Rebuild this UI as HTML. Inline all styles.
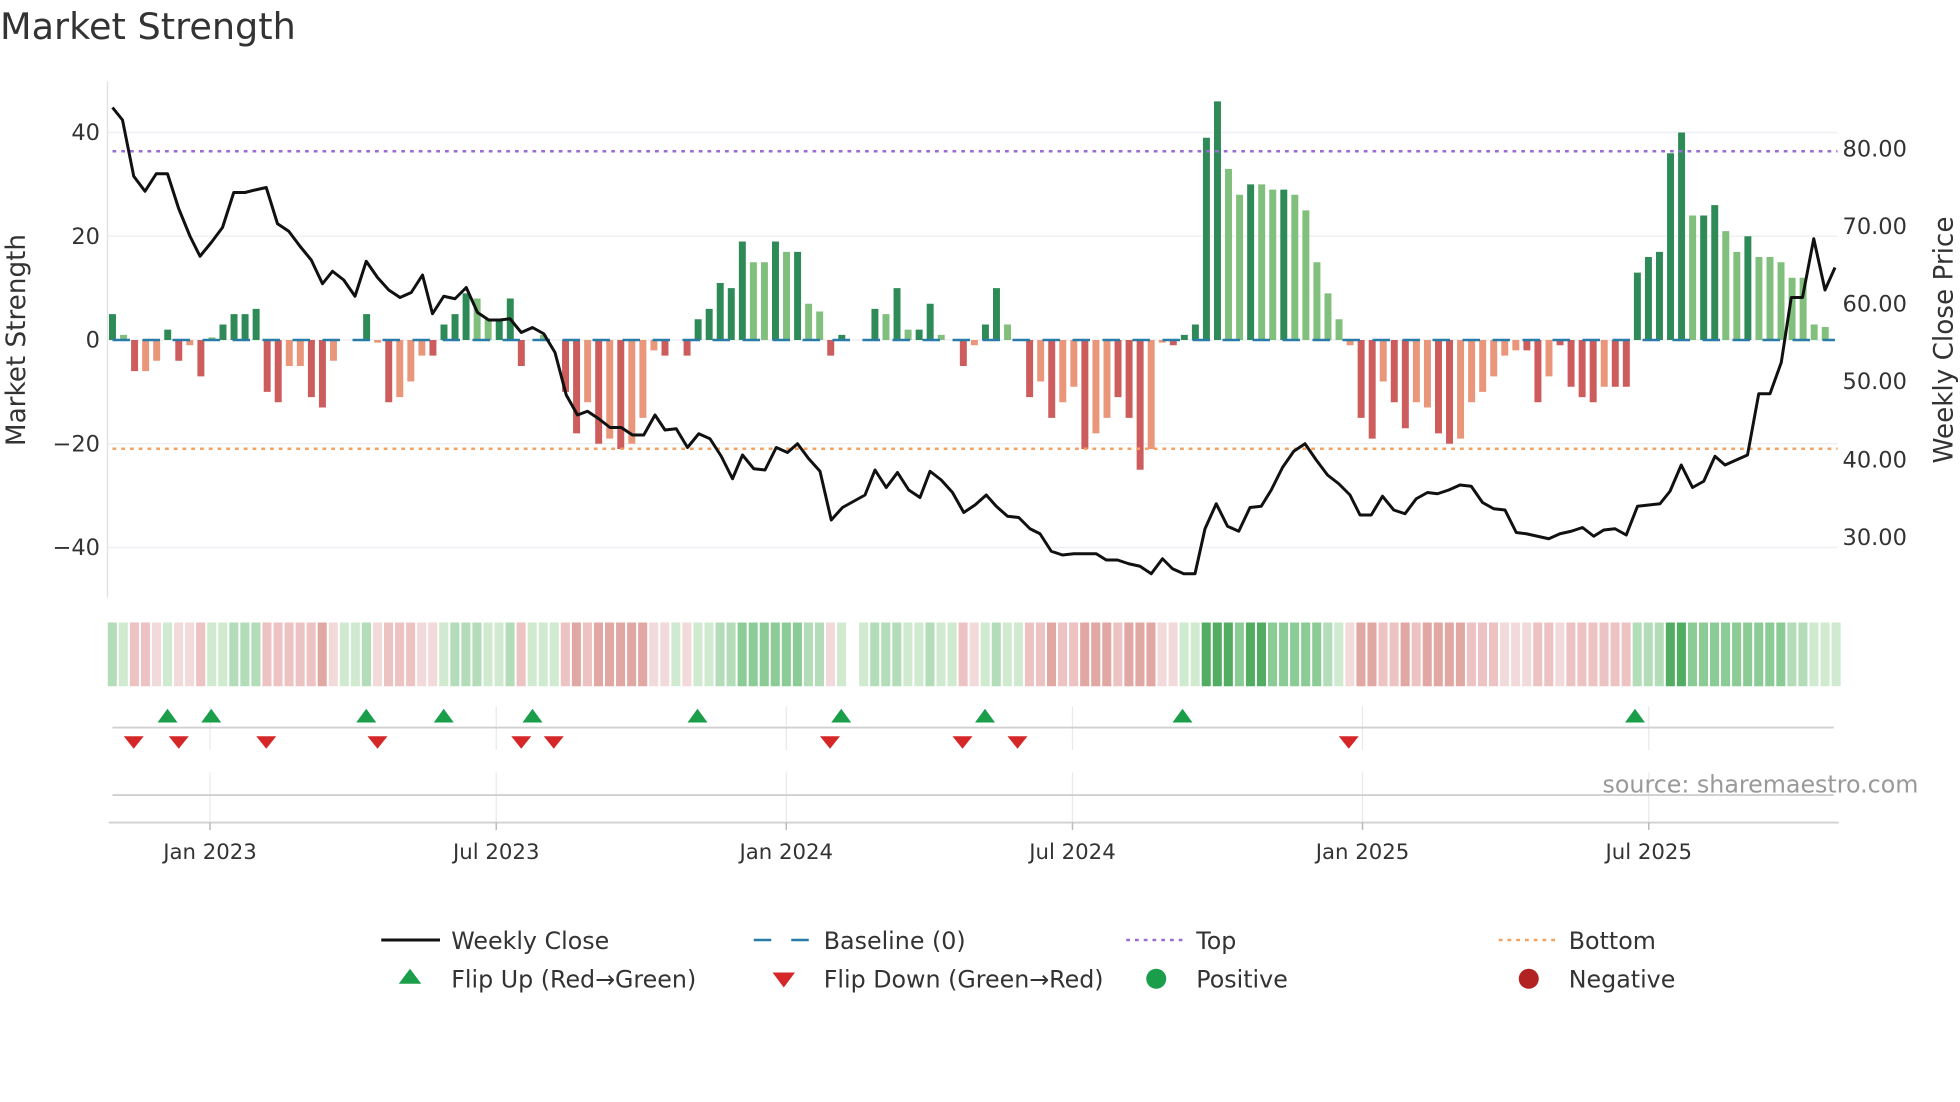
<!DOCTYPE html>
<html><head><meta charset="utf-8"><style>
html,body{margin:0;padding:0;background:#fff;width:1960px;height:1102px;overflow:hidden}
svg{display:block}
text{font-family:"DejaVu Sans","Liberation Sans",sans-serif;fill:#333}
</style></head><body>
<svg width="1960" height="1102" viewBox="0 0 1568 881.6" xmlns="http://www.w3.org/2000/svg">
<rect width="1568" height="882" fill="#fff"/>
<text x="0" y="31" font-size="29.3">Market Strength</text>
<!-- grid -->
<g stroke="#eef0f3" stroke-width="1.2">
<line x1="86" y1="106" x2="1470" y2="106"/><line x1="86" y1="189" x2="1470" y2="189"/>
<line x1="86" y1="272" x2="1470" y2="272"/><line x1="86" y1="355" x2="1470" y2="355"/>
<line x1="86" y1="438" x2="1470" y2="438"/>
</g>
<line x1="86" y1="65" x2="86" y2="478" stroke="#e2e4e8" stroke-width="1.2"/>
<g font-size="18" text-anchor="end">
<text x="80" y="112">40</text><text x="80" y="195">20</text><text x="80" y="278">0</text>
<text x="80" y="361">−20</text><text x="80" y="444">−40</text>
</g>
<g font-size="18">
<text x="1474" y="125">80.00</text><text x="1474" y="187">70.00</text><text x="1474" y="249">60.00</text>
<text x="1474" y="311">50.00</text><text x="1474" y="374">40.00</text><text x="1474" y="436">30.00</text>
</g>
<text font-size="21" transform="translate(20,272) rotate(-90)" text-anchor="middle">Market Strength</text>
<text font-size="21" transform="translate(1562,272) rotate(-90)" text-anchor="middle">Weekly Close Price</text>
<!-- bars -->
<g transform="translate(87.2,272) scale(8.84,-4.15)">
<path fill="#2e8b57" d="M0 0h.63v5h-.63zM5 0h.63v2h-.63zM10 0h.63v3h-.63zM11 0h.63v5h-.63zM12 0h.63v5h-.63zM13 0h.63v6h-.63zM23 0h.63v5h-.63zM30 0h.63v3h-.63zM31 0h.63v5h-.63zM32 0h.63v9h-.63zM35 0h.63v4h-.63zM36 0h.63v8h-.63zM53 0h.63v4h-.63zM54 0h.63v6h-.63zM55 0h.63v11h-.63zM56 0h.63v10h-.63zM57 0h.63v19h-.63zM60 0h.63v19h-.63zM62 0h.63v17h-.63zM66 0h.63v1h-.63zM69 0h.63v6h-.63zM71 0h.63v10h-.63zM73 0h.63v2h-.63zM74 0h.63v7h-.63zM79 0h.63v3h-.63zM80 0h.63v10h-.63zM97 0h.63v1h-.63zM98 0h.63v3h-.63zM99 0h.63v39h-.63zM100 0h.63v46h-.63zM103 0h.63v30h-.63zM106 0h.63v29h-.63zM138 0h.63v13h-.63zM139 0h.63v16h-.63zM140 0h.63v17h-.63zM141 0h.63v36h-.63zM142 0h.63v40h-.63zM144 0h.63v24h-.63zM145 0h.63v26h-.63zM148 0h.63v20h-.63z"/>
<path fill="#80bf7c" d="M1 0h.63v1h-.63zM9 0h.63v.5h-.63zM33 0h.63v8h-.63zM34 0h.63v4h-.63zM39 0h.63v1h-.63zM58 0h.63v15h-.63zM59 0h.63v15h-.63zM61 0h.63v17h-.63zM63 0h.63v7h-.63zM64 0h.63v5.5h-.63zM70 0h.63v5h-.63zM72 0h.63v2h-.63zM75 0h.63v1h-.63zM81 0h.63v3h-.63zM101 0h.63v33h-.63zM102 0h.63v28h-.63zM104 0h.63v30h-.63zM105 0h.63v29h-.63zM107 0h.63v28h-.63zM108 0h.63v25h-.63zM109 0h.63v15h-.63zM110 0h.63v9h-.63zM111 0h.63v4h-.63zM143 0h.63v24h-.63zM146 0h.63v21h-.63zM147 0h.63v17h-.63zM149 0h.63v16h-.63zM150 0h.63v16h-.63zM151 0h.63v15h-.63zM152 0h.63v12h-.63zM153 0h.63v12h-.63zM154 0h.63v3h-.63zM155 0h.63v2.5h-.63z"/>
<path fill="#cd5c5c" d="M2 0h.63v-6h-.63zM6 0h.63v-4h-.63zM8 0h.63v-7h-.63zM14 0h.63v-10h-.63zM15 0h.63v-12h-.63zM18 0h.63v-11h-.63zM19 0h.63v-13h-.63zM25 0h.63v-12h-.63zM29 0h.63v-3h-.63zM37 0h.63v-5h-.63zM41 0h.63v-10h-.63zM42 0h.63v-18h-.63zM44 0h.63v-20h-.63zM46 0h.63v-21h-.63zM50 0h.63v-3h-.63zM52 0h.63v-3h-.63zM65 0h.63v-3h-.63zM77 0h.63v-5h-.63zM83 0h.63v-11h-.63zM85 0h.63v-15h-.63zM88 0h.63v-21h-.63zM91 0h.63v-11h-.63zM92 0h.63v-15h-.63zM93 0h.63v-25h-.63zM96 0h.63v-1h-.63zM113 0h.63v-15h-.63zM114 0h.63v-19h-.63zM116 0h.63v-12h-.63zM117 0h.63v-17h-.63zM120 0h.63v-18h-.63zM121 0h.63v-20h-.63zM128 0h.63v-2h-.63zM129 0h.63v-12h-.63zM131 0h.63v-1h-.63zM132 0h.63v-9h-.63zM133 0h.63v-11h-.63zM134 0h.63v-12h-.63zM136 0h.63v-9h-.63zM137 0h.63v-9h-.63z"/>
<path fill="#e9967a" d="M3 0h.63v-6h-.63zM4 0h.63v-4h-.63zM7 0h.63v-1h-.63zM16 0h.63v-5h-.63zM17 0h.63v-5h-.63zM20 0h.63v-4h-.63zM24 0h.63v-.5h-.63zM26 0h.63v-11h-.63zM27 0h.63v-8h-.63zM28 0h.63v-3h-.63zM43 0h.63v-12h-.63zM45 0h.63v-19h-.63zM47 0h.63v-20h-.63zM48 0h.63v-15h-.63zM49 0h.63v-2h-.63zM78 0h.63v-1h-.63zM84 0h.63v-8h-.63zM86 0h.63v-12h-.63zM87 0h.63v-9h-.63zM89 0h.63v-18h-.63zM90 0h.63v-15h-.63zM94 0h.63v-21h-.63zM95 0h.63v-.5h-.63zM112 0h.63v-1h-.63zM115 0h.63v-8h-.63zM118 0h.63v-12h-.63zM119 0h.63v-13h-.63zM122 0h.63v-19h-.63zM123 0h.63v-12h-.63zM124 0h.63v-10h-.63zM125 0h.63v-7h-.63zM126 0h.63v-3h-.63zM127 0h.63v-2h-.63zM130 0h.63v-7h-.63zM135 0h.63v-9h-.63z"/>
</g>
<line x1="90" y1="272" x2="1468" y2="272" stroke="#2a7ca8" stroke-width="2" stroke-dasharray="14 10"/>
<line x1="90" y1="121" x2="1470" y2="121" stroke="#9b6bd6" stroke-width="2" stroke-dasharray="3 4"/>
<line x1="90" y1="359" x2="1470" y2="359" stroke="#f4a261" stroke-width="2" stroke-dasharray="3 4"/>
<polyline fill="none" stroke="#111" stroke-width="2.4" stroke-linejoin="round" points="90,86 98,96 107,141 116,153 125,139 134,139 143,167 152,189 160,205 169,194 178,182 187,154 196,154 204,152 213,150 222,179 231,185 240,197 249,208 258,227 266,217 275,224 284,237 293,209 302,222 311,232 320,238 329,234 338,220 346,251 355,237 364,239 373,230 382,250 391,256 400,256 408,255 417,266 426,262 435,267 444,282 453,316 462,332 470,329 479,335 488,342 497,342 506,348 515,348 524,332 532,344 541,343 550,358 559,347 568,351 577,365 586,383 594,364 603,375 612,376 621,358 630,362 638,355 647,367 656,377 665,416 674,406 683,401 692,396 700,376 709,390 718,378 727,392 736,398 744,377 753,384 762,394 771,410 780,404 789,396 797,405 806,413 815,414 824,423 832,427 841,441 850,444 859,443 868,443 877,443 885,448 894,448 903,451 912,453 921,459 930,447 938,455 947,459 956,459 964,423 973,403 982,421 991,425 1000,406 1009,405 1017,392 1026,374 1035,361 1044,355 1053,368 1062,380 1071,387 1080,396 1088,412 1097,412 1106,397 1115,408 1124,411 1133,399 1142,394 1150,395 1159,392 1168,388 1177,389 1186,402 1195,407 1204,408 1213,426 1221,427 1230,429 1239,431 1248,427 1257,425 1266,422 1275,429 1283,424 1292,423 1301,428 1310,405 1319,404 1328,403 1336,393 1345,372 1354,390 1363,385 1372,365 1380,372 1389,368 1398,364 1407,315 1416,315 1425,290 1433,238 1442,238 1451,191 1460,232 1468,214"/>
<!-- heat strip -->
<g transform="translate(86.2,498) scale(8.84,51)">
<path fill="#52ad62" d="M99 0h.82v1h-.82zM100 0h.82v1h-.82zM101 0h.82v1h-.82zM103 0h.82v1h-.82zM104 0h.82v1h-.82zM141 0h.82v1h-.82zM142 0h.82v1h-.82z"/>
<path fill="#8bcb95" d="M57 0h.82v1h-.82zM58 0h.82v1h-.82zM59 0h.82v1h-.82zM60 0h.82v1h-.82zM61 0h.82v1h-.82zM62 0h.82v1h-.82zM102 0h.82v1h-.82zM105 0h.82v1h-.82zM106 0h.82v1h-.82zM107 0h.82v1h-.82zM108 0h.82v1h-.82zM109 0h.82v1h-.82zM143 0h.82v1h-.82zM144 0h.82v1h-.82zM145 0h.82v1h-.82zM146 0h.82v1h-.82zM147 0h.82v1h-.82zM148 0h.82v1h-.82zM149 0h.82v1h-.82zM150 0h.82v1h-.82zM151 0h.82v1h-.82z"/>
<path fill="#b3ddb8" d="M0 0h.82v1h-.82zM11 0h.82v1h-.82zM12 0h.82v1h-.82zM13 0h.82v1h-.82zM23 0h.82v1h-.82zM31 0h.82v1h-.82zM32 0h.82v1h-.82zM33 0h.82v1h-.82zM36 0h.82v1h-.82zM55 0h.82v1h-.82zM56 0h.82v1h-.82zM63 0h.82v1h-.82zM64 0h.82v1h-.82zM69 0h.82v1h-.82zM70 0h.82v1h-.82zM71 0h.82v1h-.82zM74 0h.82v1h-.82zM80 0h.82v1h-.82zM110 0h.82v1h-.82zM138 0h.82v1h-.82zM139 0h.82v1h-.82zM140 0h.82v1h-.82zM152 0h.82v1h-.82zM153 0h.82v1h-.82z"/>
<path fill="#d0eacf" d="M1 0h.82v1h-.82zM5 0h.82v1h-.82zM9 0h.82v1h-.82zM10 0h.82v1h-.82zM21 0h.82v1h-.82zM22 0h.82v1h-.82zM30 0h.82v1h-.82zM34 0h.82v1h-.82zM35 0h.82v1h-.82zM38 0h.82v1h-.82zM39 0h.82v1h-.82zM40 0h.82v1h-.82zM51 0h.82v1h-.82zM53 0h.82v1h-.82zM54 0h.82v1h-.82zM66 0h.82v1h-.82zM68 0h.82v1h-.82zM72 0h.82v1h-.82zM73 0h.82v1h-.82zM75 0h.82v1h-.82zM76 0h.82v1h-.82zM79 0h.82v1h-.82zM81 0h.82v1h-.82zM82 0h.82v1h-.82zM97 0h.82v1h-.82zM98 0h.82v1h-.82zM111 0h.82v1h-.82zM154 0h.82v1h-.82zM155 0h.82v1h-.82zM156 0h.82v1h-.82z"/>
<path fill="#f3dada" d="M4 0h.82v1h-.82zM6 0h.82v1h-.82zM7 0h.82v1h-.82zM20 0h.82v1h-.82zM24 0h.82v1h-.82zM28 0h.82v1h-.82zM29 0h.82v1h-.82zM49 0h.82v1h-.82zM50 0h.82v1h-.82zM52 0h.82v1h-.82zM65 0h.82v1h-.82zM78 0h.82v1h-.82zM95 0h.82v1h-.82zM96 0h.82v1h-.82zM112 0h.82v1h-.82zM126 0h.82v1h-.82zM127 0h.82v1h-.82zM128 0h.82v1h-.82zM131 0h.82v1h-.82z"/>
<path fill="#ecc3c2" d="M2 0h.82v1h-.82zM3 0h.82v1h-.82zM8 0h.82v1h-.82zM14 0h.82v1h-.82zM15 0h.82v1h-.82zM16 0h.82v1h-.82zM17 0h.82v1h-.82zM18 0h.82v1h-.82zM25 0h.82v1h-.82zM26 0h.82v1h-.82zM27 0h.82v1h-.82zM37 0h.82v1h-.82zM41 0h.82v1h-.82zM43 0h.82v1h-.82zM77 0h.82v1h-.82zM83 0h.82v1h-.82zM84 0h.82v1h-.82zM86 0h.82v1h-.82zM87 0h.82v1h-.82zM91 0h.82v1h-.82zM115 0h.82v1h-.82zM116 0h.82v1h-.82zM118 0h.82v1h-.82zM123 0h.82v1h-.82zM124 0h.82v1h-.82zM125 0h.82v1h-.82zM129 0h.82v1h-.82zM130 0h.82v1h-.82zM132 0h.82v1h-.82zM133 0h.82v1h-.82zM134 0h.82v1h-.82zM135 0h.82v1h-.82zM136 0h.82v1h-.82zM137 0h.82v1h-.82z"/>
<path fill="#e1a7a3" d="M19 0h.82v1h-.82zM42 0h.82v1h-.82zM44 0h.82v1h-.82zM45 0h.82v1h-.82zM46 0h.82v1h-.82zM47 0h.82v1h-.82zM48 0h.82v1h-.82zM85 0h.82v1h-.82zM88 0h.82v1h-.82zM89 0h.82v1h-.82zM90 0h.82v1h-.82zM92 0h.82v1h-.82zM93 0h.82v1h-.82zM94 0h.82v1h-.82zM113 0h.82v1h-.82zM114 0h.82v1h-.82zM117 0h.82v1h-.82zM119 0h.82v1h-.82zM120 0h.82v1h-.82zM121 0h.82v1h-.82zM122 0h.82v1h-.82z"/>
</g>
<!-- flips panel -->
<g stroke="#e8eaee" stroke-width="1">
<line x1="168" y1="565" x2="168" y2="600"/><line x1="397" y1="565" x2="397" y2="600"/><line x1="629" y1="565" x2="629" y2="600"/><line x1="858" y1="565" x2="858" y2="600"/><line x1="1090" y1="565" x2="1090" y2="600"/><line x1="1319" y1="565" x2="1319" y2="600"/>
<line x1="168" y1="618" x2="168" y2="658"/><line x1="397" y1="618" x2="397" y2="658"/><line x1="629" y1="618" x2="629" y2="658"/><line x1="858" y1="618" x2="858" y2="658"/><line x1="1090" y1="618" x2="1090" y2="658"/><line x1="1319" y1="618" x2="1319" y2="658"/>
</g>
<line x1="90" y1="582" x2="1467" y2="582" stroke="#d0d0d0" stroke-width="1.5"/>
<line x1="90" y1="636" x2="1467" y2="636" stroke="#d0d0d0" stroke-width="1.5"/>
<line x1="87" y1="658" x2="1471" y2="658" stroke="#d0d0d0" stroke-width="1.5"/>
<g stroke="#bbb" stroke-width="1.2">
<line x1="168" y1="658" x2="168" y2="664"/><line x1="397" y1="658" x2="397" y2="664"/><line x1="629" y1="658" x2="629" y2="664"/><line x1="858" y1="658" x2="858" y2="664"/><line x1="1090" y1="658" x2="1090" y2="664"/><line x1="1319" y1="658" x2="1319" y2="664"/>
</g>
<g fill="#1a9e4a">
<path d="M126 578l8-11 8 11z"/><path d="M161 578l8-11 8 11z"/><path d="M285 578l8-11 8 11z"/><path d="M347 578l8-11 8 11z"/><path d="M418 578l8-11 8 11z"/><path d="M550 578l8-11 8 11z"/><path d="M665 578l8-11 8 11z"/><path d="M780 578l8-11 8 11z"/><path d="M938 578l8-11 8 11z"/><path d="M1300 578l8-11 8 11z"/>
</g>
<g fill="#d62728">
<path d="M99 589l8 10 8-10z"/><path d="M135 589l8 10 8-10z"/><path d="M205 589l8 10 8-10z"/><path d="M294 589l8 10 8-10z"/><path d="M409 589l8 10 8-10z"/><path d="M435 589l8 10 8-10z"/><path d="M656 589l8 10 8-10z"/><path d="M762 589l8 10 8-10z"/><path d="M806 589l8 10 8-10z"/><path d="M1071 589l8 10 8-10z"/>
</g>
<text x="1282" y="634" font-size="19" style="fill:#999">source: sharemaestro.com</text>
<g font-size="17" text-anchor="middle">
<text x="168" y="687">Jan 2023</text><text x="397" y="687">Jul 2023</text><text x="629" y="687">Jan 2024</text><text x="858" y="687">Jul 2024</text><text x="1090" y="687">Jan 2025</text><text x="1319" y="687">Jul 2025</text>
</g>
<!-- legend -->
<line x1="305" y1="752" x2="352" y2="752" stroke="#111" stroke-width="2.4"/>
<line x1="603" y1="752" x2="648" y2="752" stroke="#2a7ca8" stroke-width="2" stroke-dasharray="14 16"/>
<line x1="901" y1="752" x2="946" y2="752" stroke="#9b6bd6" stroke-width="2" stroke-dasharray="3 4"/>
<line x1="1199" y1="752" x2="1244" y2="752" stroke="#f4a261" stroke-width="2" stroke-dasharray="3 4"/>
<path d="M319 787l9-12 9 12z" fill="#1a9e4a"/>
<path d="M618 778l9 12 9-12z" fill="#d62728"/>
<circle cx="925" cy="783" r="8" fill="#1a9e4a"/>
<circle cx="1223" cy="783" r="8" fill="#b22222"/>
<g font-size="19">
<text x="361" y="759">Weekly Close</text><text x="659" y="759">Baseline (0)</text><text x="957" y="759">Top</text><text x="1255" y="759">Bottom</text>
<text x="361" y="790">Flip Up (Red→Green)</text><text x="659" y="790">Flip Down (Green→Red)</text><text x="957" y="790">Positive</text><text x="1255" y="790">Negative</text>
</g>
</svg>
</body></html>
